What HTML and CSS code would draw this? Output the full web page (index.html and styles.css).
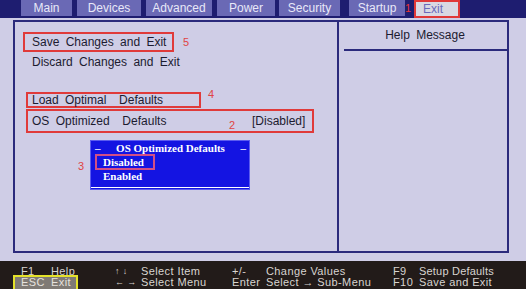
FILE: index.html
```html
<!DOCTYPE html>
<html>
<head>
<meta charset="utf-8">
<link rel="stylesheet" href="styles.css">
</head>
<body>
<div class="screen">
  <div class="topbar">
    <div class="tab tab-main">Main</div>
    <div class="tab tab-devices">Devices</div>
    <div class="tab tab-advanced">Advanced</div>
    <div class="tab tab-power">Power</div>
    <div class="tab tab-security">Security</div>
    <div class="tab tab-startup">Startup</div>
    <div class="tab-mark">1</div>
    <div class="tab tab-exit">Exit</div>
  </div>
  <div class="body">
    <div class="frame">
      <div class="menu">
        <div class="row row-save">
          <div class="box box-save">Save Changes and Exit</div>
          <span class="note note-5">5</span>
        </div>
        <div class="row row-discard">Discard Changes and Exit</div>
        <div class="row row-load">
          <div class="box box-load">Load Optimal &nbsp;Defaults</div>
          <span class="note note-4">4</span>
        </div>
        <div class="row row-os">
          <div class="box box-os">
            <span class="os-label">OS Optimized &nbsp;Defaults</span>
            <span class="note note-2">2</span>
            <span class="os-value">[Disabled]</span>
          </div>
        </div>
        <div class="row row-popup">
          <span class="note note-3">3</span>
          <div class="popup">
            <div class="popup-title"><span>–</span><span>OS Optimized Defaults</span><span>–</span></div>
            <div class="popup-opt popup-sel">Disabled</div>
            <div class="popup-opt popup-plain">Enabled</div>
            <div class="popup-rule"></div>
          </div>
        </div>
      </div>
      <div class="help">
        <div class="help-title">Help Message</div>
        <div class="help-rule"></div>
      </div>
    </div>
  </div>
  <div class="footer">
    <div class="frow">
      <span class="c1">F1</span>
      <span class="c2">Help</span>
      <span class="c3">↑ ↓</span>
      <span class="c4">Select Item</span>
      <span class="c5">+/-</span>
      <span class="c6">Change Values</span>
      <span class="c7">F9</span>
      <span class="c8 tight">Setup Defaults</span>
    </div>
    <div class="frow">
      <span class="esc-box"><span class="c1">ESC</span><span>Exit</span></span>
      <span class="c3">← →</span>
      <span class="c4">Select Menu</span>
      <span class="c5">Enter</span>
      <span class="c6">Select → Sub-Menu</span>
      <span class="c7">F10</span>
      <span class="c8">Save and Exit</span>
    </div>
  </div>
</div>
</body>
</html>
```
FILE: styles.css
```css
* { box-sizing: border-box; }
html, body { margin: 0; padding: 0; }
body {
  width: 526px;
  height: 289px;
  overflow: hidden;
  background: #cfcde6;
  font-family: "Liberation Sans", Arial, sans-serif;
}
.screen {
  display: flex;
  flex-direction: column;
  height: 289px;
}

/* top bar */
.topbar {
  height: 18px;
  background: #1e1d70;
  display: flex;
  align-items: flex-start;
  gap: 5px;
  padding-left: 21px;
  flex: none;
}
.tab {
  height: 16px;
  background: #6a69b5;
  color: #e8e8f8;
  font-size: 12px;
  line-height: 16px;
  text-align: center;
}
.tab-main { width: 51px; }
.tab-devices { width: 64px; }
.tab-advanced { width: 66px; }
.tab-power { width: 58px; }
.tab-security { width: 61px; margin-left: -1px; }
.tab-startup { width: 56px; margin-left: 4px; }
.tab-mark {
  width: 4px;
  margin-left: -5px;
  color: #e83434;
  font-size: 11px;
  line-height: 16px;
  overflow: visible;
}
.tab-exit {
  width: 46px;
  height: 18px;
  background: #d9d8e3;
  border: 2px solid #e03838;
  color: #6a69bb;
  text-align: left;
  padding-left: 7px;
  line-height: 14px;
}

/* main frame */
.body {
  flex: none;
  padding: 2px 0 0 13px;
  height: 235px;
}
.frame {
  width: 496px;
  height: 233px;
  border: 2px solid #2b2a7c;
  display: flex;
}
.menu {
  width: 322px;
  display: flex;
  flex-direction: column;
  font-size: 12px;
  color: #1c1b30;
  word-spacing: 3px;
}
.help {
  flex: 1;
  border-left: 2px solid #2b2a7c;
}
.help-title {
  padding-top: 6px;
  height: 27px;
  line-height: 14px;
  font-size: 12px;
  color: #1c1b30;
  word-spacing: 3px;
  text-align: center;
  padding-left: 4px;
}
.help-rule {
  margin-left: 5px;
  height: 2px;
  background: #2b2a7c;
}

.row { display: flex; align-items: center; }
.box { border: 2px solid #e03a3a; }
.note {
  color: #e04444;
  font-size: 11px;
  word-spacing: 0;
}
.row-save { margin-top: 10px; }
.box-save {
  margin-left: 8px;
  width: 151px;
  height: 20px;
  padding-left: 7px;
  line-height: 16px;
}
.note-5 { margin-left: 9px; }
.row-discard {
  margin-top: 2px;
  line-height: 16px;
  padding-left: 17px;
}
.row-load { margin-top: 22px; align-items: flex-start; }
.box-load {
  margin-left: 11px;
  width: 175px;
  height: 16px;
  padding-left: 4px;
  line-height: 12px;
}
.note-4 { margin-left: 7px; margin-top: -4px; line-height: 12px; }
.row-os { margin-top: 1px; }
.box-os {
  margin-left: 11px;
  width: 288px;
  height: 24px;
  padding-left: 4px;
  display: flex;
  align-items: center;
}
.os-label { width: 197px; }
.note-2 { width: 23px; margin-top: 8px; }
.os-value { word-spacing: 0; }

.row-popup {
  margin-top: 7px;
  padding-left: 63px;
}
.note-3 { width: 12px; margin-top: 2px; }
.popup {
  width: 160px;
  height: 50px;
  background: #1414e2;
  border: 1px solid #5c5cf0;
  padding-top: 1px;
  font-family: "Liberation Serif", "Times New Roman", serif;
  font-weight: bold;
  font-size: 11px;
  color: #ffffff;
  word-spacing: 0;
  display: flex;
  flex-direction: column;
}
.popup-title {
  height: 12px;
  line-height: 12px;
  display: flex;
  justify-content: space-between;
  padding: 0 3px 0 4px;
}
.popup-opt { line-height: 12px; }
.popup-sel {
  margin-left: 4px;
  width: 60px;
  height: 16px;
  border: 2px solid #d24f86;
  padding-left: 6px;
}
.popup-plain {
  padding-left: 12px;
  height: 12px;
}
.popup-rule {
  margin-top: 5px;
  height: 1px;
  background: #ffffff;
}

/* footer */
.footer {
  flex: none;
  height: 28px;
  margin-top: 8px;
  background: #221b19;
  padding: 5px 0 0 21px;
  color: #d8d4d0;
  font-size: 11px;
  letter-spacing: 0.4px;
  overflow: hidden;
}
.frow {
  display: flex;
  height: 11px;
  line-height: 11px;
  white-space: nowrap;
}
.c1 { width: 30px; }
.c2 { width: 64px; }
.c3 { width: 26px; font-size: 9px; }
.c4 { width: 91px; }
.c5 { width: 34px; }
.c6 { width: 127px; }
.c7 { width: 26px; }
.tight { letter-spacing: 0.2px; }
.esc-box {
  display: flex;
  margin-left: -8px;
  margin-right: 37px;
  margin-top: -2px;
  width: 65px;
  height: 16px;
  padding-left: 6px;
  border: 2px solid #e4e22a;
  background: #7f7a75;
  color: #e6e2de;
}
```
